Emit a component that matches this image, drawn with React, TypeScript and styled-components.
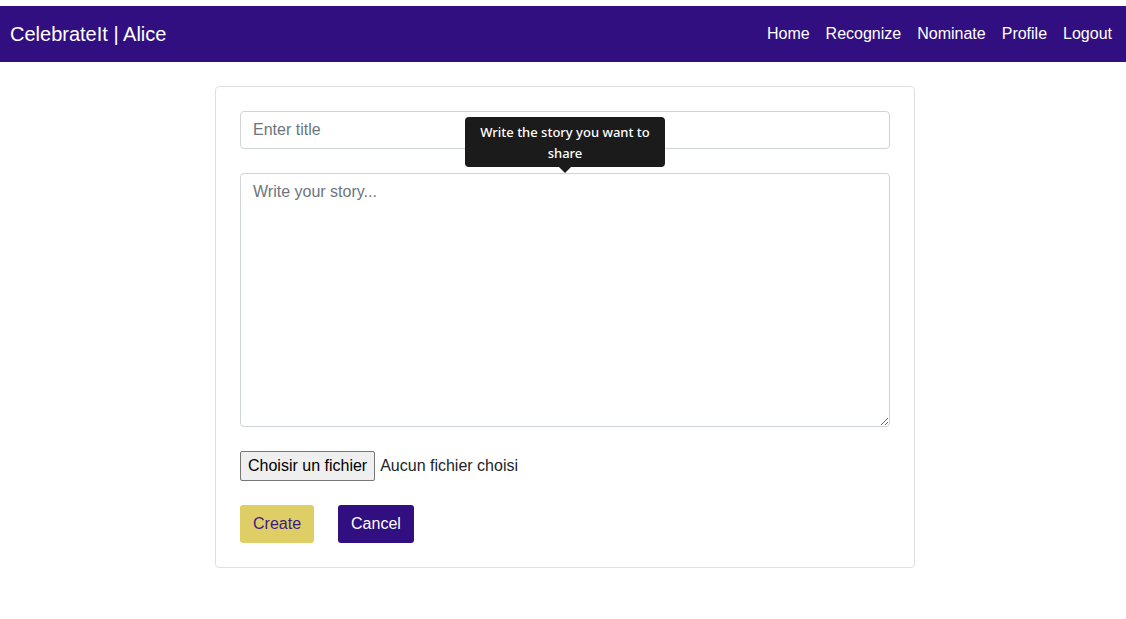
import React from "react";
import styled, { createGlobalStyle } from "styled-components";

const Global = createGlobalStyle`
  html, body { margin: 0; padding: 0; background: #fff; }
  body { font-family: "Liberation Sans", Arial, sans-serif; }
  * { box-sizing: border-box; }
`;

const Page = styled.div`
  padding-top: 6px;
`;

const NavBar = styled.nav`
  height: 56px;
  background: #310f80;
  display: flex;
  align-items: center;
  justify-content: space-between;
  padding: 0 6px 0 10px;
`;

const Brand = styled.span`
  color: #fff;
  font-size: 20px;
  line-height: 24px;
`;

const NavLinks = styled.div`
  display: flex;
  align-items: center;
`;

const NavLink = styled.a`
  color: #fff;
  font-size: 16px;
  line-height: 24px;
  padding: 0 8px;
  text-decoration: none;
`;

const Main = styled.main`
  display: flex;
  justify-content: center;
  padding: 24px 0 0 4px;
`;

const Card = styled.div`
  width: 700px;
  border: 1px solid #dfdfdf;
  border-radius: 4px;
  padding: 24px;
  display: flex;
  flex-direction: column;
`;

const Field = styled.div`
  position: relative;
  margin-bottom: 24px;
`;

const TextInput = styled.input`
  display: block;
  width: 100%;
  height: 38px;
  border: 1px solid #ced4da;
  border-radius: 4px;
  padding: 6px 12px;
  font-family: "Liberation Sans", Arial, sans-serif;
  font-size: 16px;
  color: #212529;
  outline: none;
  &::placeholder { color: #6c757d; }
`;

const TextArea = styled.textarea`
  display: block;
  width: 100%;
  height: 254px;
  border: 1px solid #ced4da;
  border-radius: 4px;
  padding: 6px 12px;
  font-family: "Liberation Sans", Arial, sans-serif;
  font-size: 16px;
  line-height: 24px;
  color: #212529;
  resize: vertical;
  outline: none;
  &::placeholder { color: #6c757d; }
`;

const Tooltip = styled.div`
  position: absolute;
  left: 225px;
  top: -56px;
  width: 200px;
  height: 50px;
  background: #1b1b1b;
  color: #fff;
  border-radius: 4px;
  padding: 5px 8px 0;
  text-align: center;
  font-family: "Noto Sans", "Open Sans", sans-serif;
  font-size: 13px;
  font-weight: 500;
  line-height: 21px;
  &::after {
    content: "";
    position: absolute;
    left: 50%;
    bottom: -6px;
    margin-left: -6px;
    border-left: 6px solid transparent;
    border-right: 6px solid transparent;
    border-top: 6px solid #1b1b1b;
  }
`;

const FileRow = styled.div`
  display: flex;
  align-items: center;
  gap: 5px;
  margin-bottom: 24px;
  font-size: 16px;
  color: #212529;
`;

const FileButton = styled.button`
  height: 30px;
  padding: 0 7px;
  background: #efefef;
  border: 1px solid #767676;
  border-radius: 2px;
  font-family: "Liberation Sans", Arial, sans-serif;
  font-size: 16px;
  color: #000;
`;

const Actions = styled.div`
  display: flex;
  gap: 24px;
`;

const Btn = styled.button<{ $variant: "create" | "cancel" }>`
  height: 38px;
  padding: 0 13px;
  border: none;
  border-radius: 3px;
  font-family: "Liberation Sans", Arial, sans-serif;
  font-size: 16px;
  background: ${(p) => (p.$variant === "create" ? "#dfcd66" : "#310f80")};
  color: ${(p) => (p.$variant === "create" ? "#3b1a85" : "#fff")};
`;

export default function App() {
  return (
    <>
      <Global />
      <Page>
        <NavBar>
          <Brand>CelebrateIt | Alice</Brand>
          <NavLinks>
            <NavLink href="#">Home</NavLink>
            <NavLink href="#">Recognize</NavLink>
            <NavLink href="#">Nominate</NavLink>
            <NavLink href="#">Profile</NavLink>
            <NavLink href="#">Logout</NavLink>
          </NavLinks>
        </NavBar>
        <Main>
          <Card>
            <Field>
              <TextInput placeholder="Enter title" />
            </Field>
            <Field>
              <Tooltip>Write the story you want to share</Tooltip>
              <TextArea placeholder="Write your story..." />
            </Field>
            <FileRow>
              <FileButton>Choisir un fichier</FileButton>
              <span>Aucun fichier choisi</span>
            </FileRow>
            <Actions>
              <Btn $variant="create">Create</Btn>
              <Btn $variant="cancel">Cancel</Btn>
            </Actions>
          </Card>
        </Main>
      </Page>
    </>
  );
}
